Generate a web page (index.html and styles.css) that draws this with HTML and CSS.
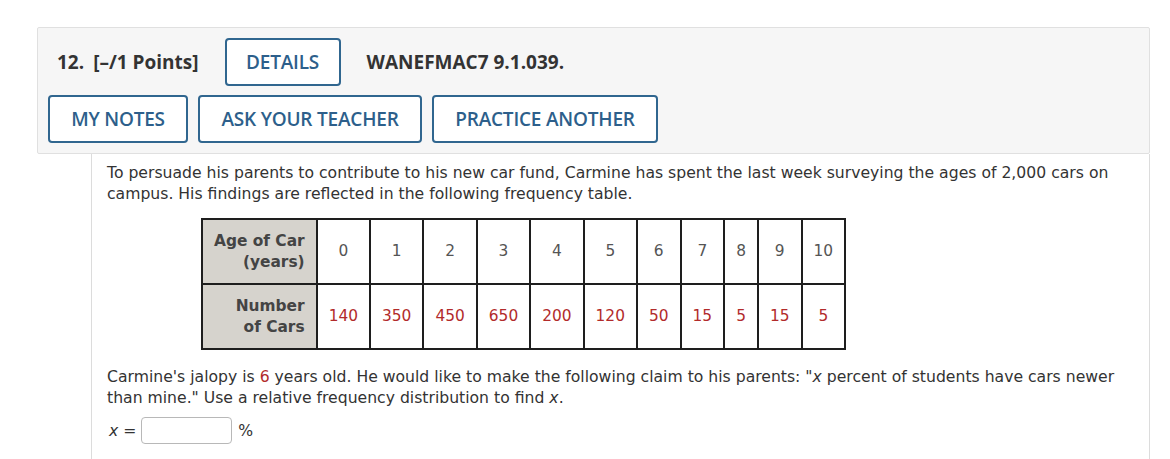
FILE: index.html
```html
<!DOCTYPE html>
<html>
<head>
<meta charset="utf-8">
<link rel="stylesheet" href="styles.css">
</head>
<body>
<div class="question">
  <div class="qhead">
    <div class="row1">
      <span class="qnum">12.</span>
      <span class="points">[–/1 Points]</span>
      <button class="btn">DETAILS</button>
      <span class="code">WANEFMAC7 9.1.039.</span>
    </div>
    <div class="row2">
      <button class="btn">MY NOTES</button>
      <button class="btn">ASK YOUR TEACHER</button>
      <button class="btn">PRACTICE ANOTHER</button>
    </div>
  </div>
  <div class="qbody">
    <p class="text">To persuade his parents to contribute to his new car fund, Carmine has spent the last week surveying the ages of 2,000 cars on campus. His findings are reflected in the following frequency table.</p>
    <table class="freq">
      <tr>
        <th>Age of Car<br>(years)</th>
        <td>0</td><td>1</td><td>2</td><td>3</td><td>4</td><td>5</td><td>6</td><td>7</td><td>8</td><td>9</td><td>10</td>
      </tr>
      <tr class="counts">
        <th>Number<br>of Cars</th>
        <td>140</td><td>350</td><td>450</td><td>650</td><td>200</td><td>120</td><td>50</td><td>15</td><td>5</td><td>15</td><td>5</td>
      </tr>
    </table>
    <p class="text">Carmine's jalopy is <span class="red">6</span> years old. He would like to make the following claim to his parents: "<i>x</i> percent of students have cars newer than mine." Use a relative frequency distribution to find <i>x</i>.</p>
    <div class="answer">
      <span class="var"><i>x</i> =</span>
      <span class="input"></span>
      <span class="pct">%</span>
    </div>
  </div>
</div>
</body>
</html>
```

FILE: styles.css
```css
html, body {
  margin: 0;
  padding: 0;
  background: #ffffff;
}
body {
  padding: 27px 20px 0 37px;
}
.question {
  width: 1113px;
}
.qhead {
  background: #f6f6f6;
  border: 1px solid #e0e0e0;
  border-radius: 2px;
  padding: 10px 10px 10px 10px;
  display: flex;
  flex-direction: column;
  gap: 9px;
}
.row1 {
  display: flex;
  align-items: center;
  padding-left: 9px;
  font-family: "Open Sans", sans-serif;
  font-weight: 700;
  font-size: 19px;
  color: #333333;
}
.qnum {
  margin-right: 9px;
}
.points {
  margin-right: 26px;
}
.code {
  margin-left: 26px;
}
.row2 {
  display: flex;
  gap: 10px;
}
.btn {
  font-family: "Open Sans", sans-serif;
  font-size: 19px;
  font-weight: 600;
  color: #2d5f8b;
  background: #ffffff;
  border: 2px solid #30668f;
  border-radius: 4px;
  height: 48px;
  padding: 0 10px;
  box-sizing: border-box;
  letter-spacing: -0.2px;
}
.row1 .btn {
  width: 116px;
}
.row2 .btn:nth-child(1) { width: 140px; }
.row2 .btn:nth-child(2) { width: 224px; }
.row2 .btn:nth-child(3) { width: 226px; }
.qbody {
  margin-left: 54px;
  border-left: 1px solid #dcdcdc;
  border-right: 1px solid #dcdcdc;
  padding: 8px 15px 20px 15px;
  font-family: "DejaVu Sans", Verdana, sans-serif;
  font-size: 15.65px;
  line-height: 21px;
  color: #333333;
}
.text {
  margin: 0;
}
.freq {
  border-collapse: collapse;
  margin: 14px 0 16px 94px;
  font-family: "DejaVu Sans", Verdana, sans-serif;
  font-size: 15.4px;
  line-height: 21px;
}
.freq th, .freq td {
  border: 2px solid #1e1e1e;
  height: 65px;
  box-sizing: border-box;
  padding: 0 11px;
}
.freq th {
  background: #d6d3cd;
  text-align: right;
  font-weight: 700;
  color: #444444;
}
.freq td {
  text-align: center;
  color: #555555;
}
.freq .counts td {
  color: #b22b2b;
}
.red {
  color: #b22b2b;
}
.answer {
  display: flex;
  align-items: center;
  margin-top: 9px;
  padding-left: 2px;
}
.var {
  margin-right: 5px;
}
.input {
  display: inline-block;
  width: 91px;
  height: 27px;
  border: 1px solid #b8b8b8;
  border-radius: 4px;
  box-sizing: border-box;
  background: #fff;
  margin-right: 6px;
}
```
